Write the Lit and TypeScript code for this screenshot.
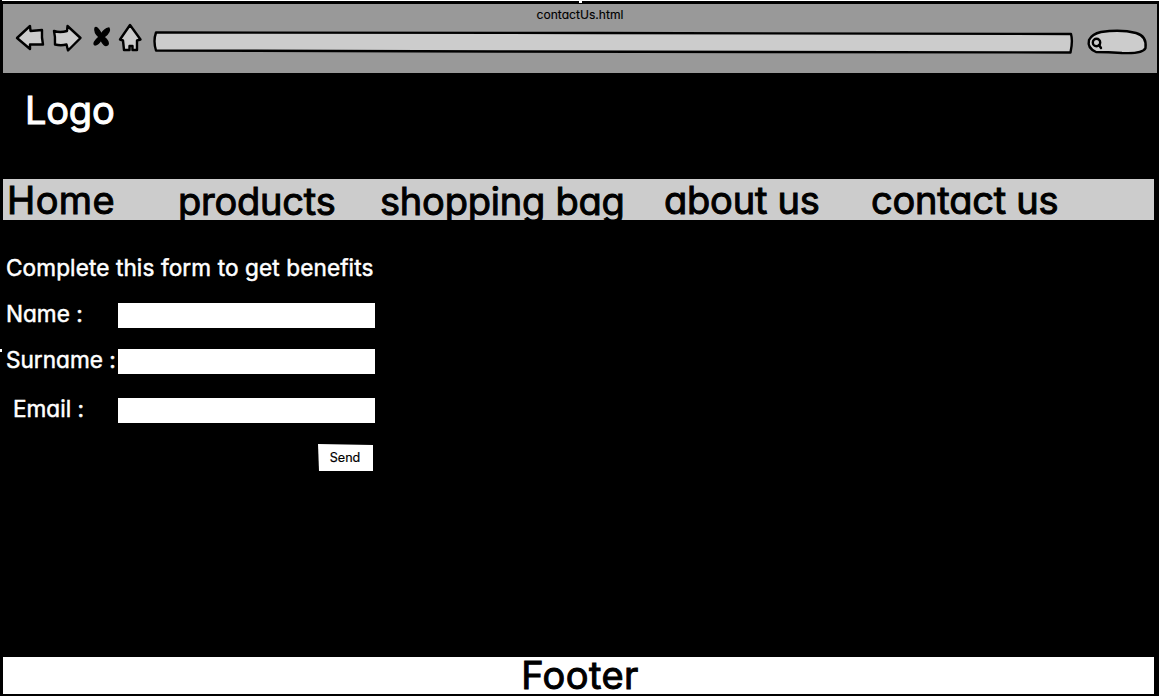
import { LitElement, html, css } from "lit";
import { customElement } from "lit/decorators.js";

@customElement("app-root")
export class AppRoot extends LitElement {
  static styles = css`
    :host { display: block; width: 1165px; height: 697px; overflow: hidden; background: #fff;
      font-family: Inter, "Open Sans", sans-serif; font-feature-settings: "cv11"; font-weight: 400; }
    * { box-sizing: border-box; }
    .window { width: 1159px; height: 696px; background: #000; display: flex; flex-direction: column; position: relative; }
    .edge { position: absolute; left: 2px; top: 0; width: 1157px; height: 1px; background: #fff; }
    .grip { position: absolute; left: 579px; top: 0; width: 3px; height: 3px; background: #fff; }
    .side { position: absolute; left: 0; top: 349px; width: 2px; height: 3px; background: #fff; }
    .chrome { margin: 4px 2px 0 3px; height: 69px; background: #999; flex: none; position: relative; }
    .chrome svg { display: block; }
    .title { position: absolute; left: 0; right: 0; top: 3px; text-align: center; font-size: 12.1px; line-height: 15px; -webkit-text-stroke: 0.15px #000; }
    .logo { color: #fff; height: 106px; padding: 14px 0 0 25px; letter-spacing: -0.2px; }
    .big { font-size: 38px; line-height: 46px; -webkit-text-stroke: 1px currentColor; stroke-linejoin: round; white-space: nowrap; }
    nav { margin: 0 5px 0 3px; height: 41px; background: #ccc; display: grid; letter-spacing: -0.22px;
      grid-template-columns: 171px 202px 284px 207px 1fr; flex: none; padding-left: 4px; }
    nav span { line-height: 42px; height: 46px; }
    nav .low { line-height: 44px; }
    .wide { letter-spacing: 0.4px; }
    form { color: #fff; font-size: 22.6px; line-height: 28px; padding-top: 34px; flex: 1; -webkit-text-stroke: 0.5px currentColor; }
    h1 { margin: 0 0 21px 6px; font: inherit; letter-spacing: 0.1px; white-space: nowrap; }
    .row { display: grid; grid-template-columns: 118px 257px; height: 25px; margin-bottom: 21px; align-items: start; }
    .row label { padding-left: 6px; margin-top: -3px; white-space: nowrap; }
    .row.email { margin-top: 24px; }
    .row.email label { padding-left: 13px; }
    .field { background: #fff; height: 25px; }
    .send { display: block; margin-left: 318px; width: 55px; height: 27px; padding: 0 1px 0 0; border: 0; background: #fff; color: #000;
      font: 400 12.6px/27px Inter, sans-serif; -webkit-text-stroke: 0.2px #000; clip-path: polygon(0 0, 100% 1px, 100% 100%, 1px 100%); }
    footer { margin: 0 5px 2px 3px; height: 37px; background: #fff; text-align: center; flex: none; }
    footer.big { line-height: 37px; padding-left: 3px; }
  `;

  render() {
    return html`
      <div class="window">
        <div class="edge"></div><div class="grip"></div><div class="side"></div>
        <header class="chrome">
          <svg width="1154" height="69" viewBox="3 4 1154 69" fill="#ccc" stroke="#000" stroke-width="2.4" stroke-linejoin="round" stroke-linecap="round">
            <path d="M17 38L30 26L30.500 31L42 30Q41.500 38 43 44.500L30 44.500V49Z"/>
            <path d="M54 31Q60 33 67 31L67.500 26L80.500 38L68 50.500L66.500 44.500Q61 46 55 44.500Q55.500 37 54 31Z"/>
            <path d="M130 25L140.500 39.500L137 40.500V50H132.500V46H129.500V50H124L123 40.500L120 39.500Z"/>
            <path fill="#000" stroke-width="1.4" d="M95 28Q97 26 101.500 34Q104 29 109 28Q111 32 104 37Q110 42 107.500 45Q104 47 101 40Q98 45 95 45Q92 43 99 37Q94 33 95 28Z"/>
            <path d="M156 32.500L600 33L1071 34Q1073 41 1070.500 52.500L500 51.500L156 50.500Q153 41 156 32.500Z"/>
            <path d="M1101 32Q1121 29 1136 33Q1147 36 1145.500 48Q1143 54 1122 53Q1108 52 1096 52Q1087 48 1089 40Q1092 34 1101 32Z"/>
            <circle cx="1096.500" cy="42.500" r="3.700" fill="none"/><path d="M1099 45L1101 48"/>
          </svg>
          <div class="title">contactUs.html</div>
        </header>
        <div class="logo big">Logo</div>
        <nav class="big"><span class="wide">Home</span><span class="low">products</span><span class="low">shopping bag</span><span>about us</span><span>contact us</span></nav>
        <form>
          <h1>Complete this form to get benefits</h1>
          <div class="row"><label>Name :</label><div class="field"></div></div>
          <div class="row"><label>Surname :</label><div class="field"></div></div>
          <div class="row email"><label>Email :</label><div class="field"></div></div>
          <button class="send" type="button">Send</button>
        </form>
        <footer class="big"><span class="wide">Footer</span></footer>
      </div>`;
  }
}
